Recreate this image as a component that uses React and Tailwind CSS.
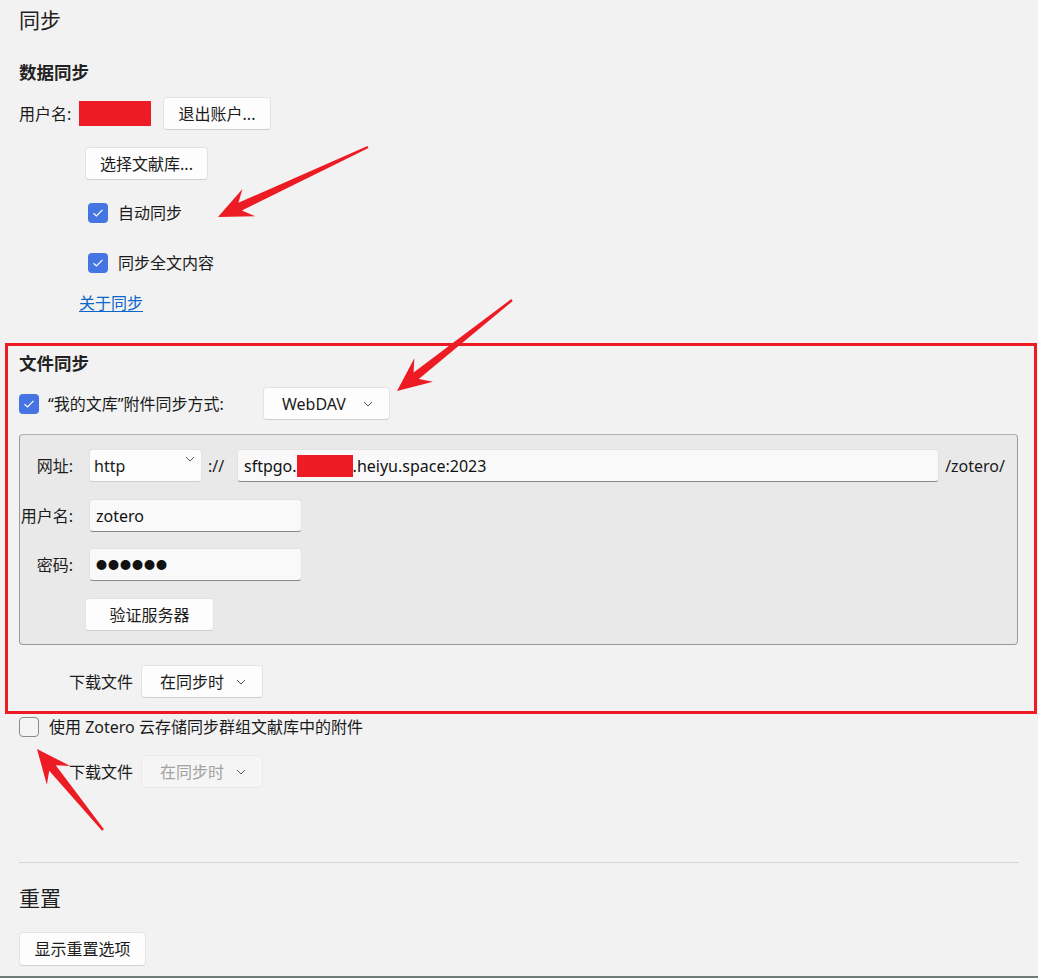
import React from 'react';

const font = { fontFamily: '"Noto Sans", "Noto Sans CJK SC", sans-serif' };

const Chevron = ({ className = '' }) => (
  <svg width="10" height="6" viewBox="0 0 10 6" className={className}>
    <path d="M1 1 L5 5 L9 1" fill="none" stroke="#5a5a5a" strokeWidth="1" />
  </svg>
);

const Check = ({ checked }) =>
  checked ? (
    <span className="w-[20px] h-[20px] rounded-[4px] bg-[#4575e2] flex items-center justify-center shrink-0">
      <svg width="12" height="10" viewBox="0 0 12 10">
        <path d="M1.5 5.2 L4.5 8 L10.5 1.8" fill="none" stroke="#fff" strokeWidth="1.2" />
      </svg>
    </span>
  ) : (
    <span className="w-[20px] h-[20px] rounded-[4px] bg-[#f4f4f4] border border-[#8b8b8b] shrink-0" />
  );

const Button = ({ children, className = '' }) => (
  <button className={`h-[33px] px-[14px] bg-[#fdfdfd] border border-[#e3e3e3] border-b-[#cfcfcf] rounded-[4px] text-[16px] text-[#1b1b1b] ${className}`}>
    {children}
  </button>
);

const Select = ({ children, disabled, className = '' }) => (
  <div className={`h-[33px] flex items-center justify-between pl-[18px] pr-[16px] rounded-[4px] border text-[16px] ${disabled ? 'bg-[#f5f5f5] border-[#e9e9e9] text-[#a2a2a2]' : 'bg-[#fdfdfd] border-[#e3e3e3] border-b-[#cfcfcf] text-[#1b1b1b]'} ${className}`}>
    <span>{children}</span>
    <Chevron />
  </div>
);

const Input = ({ children, className = '' }) => (
  <div className={`h-[33px] flex items-center px-[6px] bg-[#f9f9f9] border border-[#e2e2e2] border-b-[#8a8a8a] rounded-[4px] text-[16px] text-[#111] ${className}`}>
    {children}
  </div>
);

// annotation arrow (overlay)
const arrowPoints = (sx, sy, tx, ty, headLen, headW) => {
  const dx = tx - sx, dy = ty - sy;
  const len = Math.hypot(dx, dy);
  const ux = dx / len, uy = dy / len;
  const px = -uy, py = ux;
  const bx = tx - ux * headLen, by = ty - uy * headLen;
  const nx = tx - ux * headLen * 0.72, ny = ty - uy * headLen * 0.72;
  const w1 = 4.2, w0 = 1.2;
  const pts = [
    [tx, ty],
    [bx + px * headW, by + py * headW],
    [nx + px * w1, ny + py * w1],
    [sx + px * w0, sy + py * w0],
    [sx - px * w0, sy - py * w0],
    [nx - px * w1, ny - py * w1],
    [bx - px * headW, by - py * headW],
  ];
  return pts.map((p) => p.join(',')).join(' ');
};

export default function App() {
  return (
    <div className="relative w-[1038px] h-[978px] bg-[#f2f2f2] text-[#1b1b1b] overflow-hidden flex flex-col" style={font}>
      <div className="pl-[19px] pt-[6px] text-[21px] leading-[28px] text-[#1f1f1f]">同步</div>

      <div className="pl-[19px] mt-[26px] text-[17.5px] leading-[24px] font-bold text-[#222]">数据同步</div>

      <div className="pl-[19px] mt-[13px] flex items-center text-[16px]">
        <span className="w-[60px]">用户名:</span>
        <span className="w-[72px] h-[25px] bg-[#ed1c24]" />
        <Button className="ml-[12px] w-[108px] px-0">退出账户...</Button>
      </div>

      <div className="pl-[85px] mt-[17px]">
        <Button className="w-[123px] px-0">选择文献库...</Button>
      </div>

      <div className="pl-[88px] mt-[23px] flex items-center gap-[10px] text-[16px] leading-[20px]">
        <Check checked />
        <span>自动同步</span>
      </div>

      <div className="pl-[88px] mt-[30px] flex items-center gap-[10px] text-[16px] leading-[20px]">
        <Check checked />
        <span>同步全文内容</span>
      </div>

      <div className="pl-[79px] mt-[20px] text-[16px] leading-[20px]">
        <a className="text-[#0a66c8] underline underline-offset-2">关于同步</a>
      </div>

      <div className="mt-[30px] ml-[5px] mr-[1px] border-[3px] border-[#ed1c24] pl-[11px] pr-[16px] pt-[5px] pb-[13px]">
        <div className="text-[17.5px] leading-[24px] font-bold text-[#222]">文件同步</div>

        <div className="mt-[12px] flex items-center text-[16px]">
          <Check checked />
          <span className="ml-[9px] w-[215px]">“我的文库”附件同步方式:</span>
          <Select className="w-[127px]">WebDAV</Select>
        </div>

        <div className="mt-[14px] bg-[#e9e9e9] border border-[#9a9a9a] border-t-[#b0b0b0] rounded-[4px] pt-[14px] pb-[13px] pr-[12px] text-[16px]">
          <div className="flex items-center">
            <span className="w-[53px] text-right">网址:</span>
            <div className="relative ml-[16px] w-[113px] h-[33px] flex items-center pl-[4px] bg-[#fdfdfd] border border-[#e3e3e3] border-b-[#cfcfcf] rounded-[4px]">
              http
              <Chevron className="absolute right-[6px] top-[6px]" />
            </div>
            <span className="ml-[6px] w-[29px]">://</span>
            <Input className="flex-1">
              sftpgo.<span className="inline-block w-[56px] h-[22px] bg-[#ed1c24]" />.heiyu.space:2023
            </Input>
            <span className="ml-[6px]">/zotero/</span>
          </div>
          <div className="mt-[17px] flex items-center">
            <span className="w-[53px] text-right whitespace-nowrap">用户名:</span>
            <Input className="ml-[16px] w-[213px]">zotero</Input>
          </div>
          <div className="mt-[16px] flex items-center">
            <span className="w-[53px] text-right">密码:</span>
            <Input className="ml-[16px] w-[213px]">
              <span className="text-[11px] tracking-[1px]" style={{ fontFamily: '"Noto Sans CJK SC", sans-serif' }}>●●●●●●</span>
            </Input>
          </div>
          <div className="mt-[17px] pl-[65px]">
            <Button className="w-[129px] px-0">验证服务器</Button>
          </div>
        </div>

        <div className="mt-[20px] flex items-center text-[16px] pl-[50px]">
          <span className="w-[72px]">下载文件</span>
          <Select className="w-[122px]">在同步时</Select>
        </div>
      </div>

      <div className="pl-[19px] mt-[3px] flex items-center text-[16px] leading-[20px]">
        <Check />
        <span className="ml-[10px]">使用 Zotero 云存储同步群组文献库中的附件</span>
      </div>

      <div className="mt-[18px] flex items-center text-[16px] pl-[69px]">
        <span className="w-[72px]">下载文件</span>
        <Select disabled className="w-[122px]">在同步时</Select>
      </div>

      <div className="mx-[19px] mt-[74px] h-px bg-[#d6d6d6]" />

      <div className="pl-[19px] mt-[21px] text-[21px] leading-[28px] text-[#1f1f1f]">重置</div>

      <div className="pl-[19px] mt-[20px]">
        <Button className="h-[34px] w-[127px] px-0">显示重置选项</Button>
      </div>

      <div className="mt-auto h-[2px] bg-[#6f7b74]" />

      <svg className="absolute inset-0 pointer-events-none" width="1038" height="978">
        <polygon points={arrowPoints(368, 147, 218, 217, 34, 15)} fill="#ed1c24" />
        <polygon points={arrowPoints(512, 300, 397, 391, 34, 15)} fill="#ed1c24" />
        <polygon points={arrowPoints(103, 830, 37, 749, 34, 15)} fill="#ed1c24" />
      </svg>
    </div>
  );
}
